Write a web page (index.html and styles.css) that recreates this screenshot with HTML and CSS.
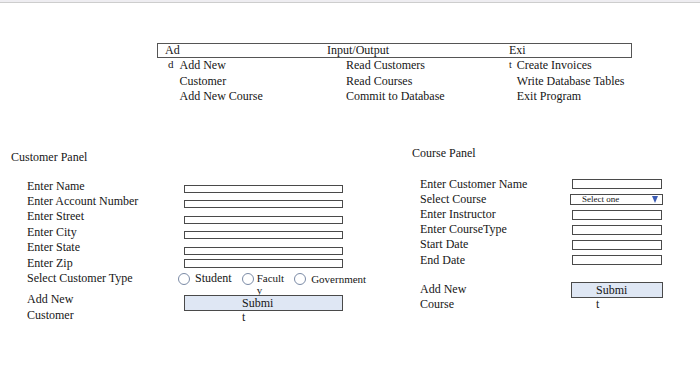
FILE: index.html
```html
<!DOCTYPE html>
<html lang="en">
<head>
    <meta charset="UTF-8">
    <meta name="viewport" content="width=device-width, initial-scale=1.0">
    <title>Customer and Course Panels</title>
    <link rel="stylesheet" href="styles.css">
</head>
<body>
    <div class="topbar"></div>

    <nav class="menu">
        <div class="menu-head">
            <span class="head-cell first">Ad</span>
            <span class="head-cell">Input/Output</span>
            <span class="head-cell">Exi</span>
        </div>
        <div class="menu-items">
            <div class="menu-col col-add">
                <span class="stray">d</span>
                <ul>
                    <li>Add New<br>Customer</li>
                    <li>Add New Course</li>
                </ul>
            </div>
            <div class="menu-col col-io">
                <ul>
                    <li>Read Customers</li>
                    <li>Read Courses</li>
                    <li>Commit to Database</li>
                </ul>
            </div>
            <div class="menu-col col-exit">
                <span class="stray">t</span>
                <ul>
                    <li>Create Invoices</li>
                    <li>Write Database Tables</li>
                    <li>Exit Program</li>
                </ul>
            </div>
        </div>
    </nav>

    <div class="panels">
        <section class="panel customer">
            <h2 class="panel-title">Customer Panel</h2>
            <div class="form customer-form">
                <div class="label">Enter Name</div>
                <div class="field"></div>
                <div class="label">Enter Account Number</div>
                <div class="field"></div>
                <div class="label">Enter Street</div>
                <div class="field"></div>
                <div class="label">Enter City</div>
                <div class="field"></div>
                <div class="label">Enter State</div>
                <div class="field"></div>
                <div class="label">Enter Zip</div>
                <div class="field zip"></div>
                <div class="label">Select Customer Type</div>
                <div class="radios">
                    <span class="radio"><span class="dot"></span><span>Student</span></span>
                    <span class="radio small"><span class="dot"></span><span class="wrap">Facult<br>y</span></span>
                    <span class="radio small"><span class="dot"></span><span>Government</span></span>
                </div>
                <div class="label add-label">Add New<br>Customer</div>
                <div class="submit">Submi<br>t</div>
            </div>
        </section>

        <section class="panel course">
            <h2 class="panel-title">Course Panel</h2>
            <div class="form course-form">
                <div class="label">Enter Customer Name</div>
                <div class="field"></div>
                <div class="label">Select Course</div>
                <div class="select"><span>Select one</span><span class="arrow"></span></div>
                <div class="label">Enter Instructor</div>
                <div class="field"></div>
                <div class="label">Enter CourseType</div>
                <div class="field"></div>
                <div class="label">Start Date</div>
                <div class="field"></div>
                <div class="label">End Date</div>
                <div class="field"></div>
                <div class="label add-label">Add New<br>Course</div>
                <div class="submit">Submi<br>t</div>
            </div>
        </section>
    </div>
</body>
</html>
```

FILE: styles.css
```css
body {
    margin: 0;
    font-family: "Liberation Serif", "Times New Roman", serif;
    font-size: 12px;
    color: #161616;
    background: #fff;
}
.topbar {
    height: 2px;
    background-color: #eeedf1;
    border-bottom: 1px solid #cdcdcd;
}

/* menu bar */
.menu {
    width: 475px;
    margin: 40px 0 0 157px;
}
.menu-head,
.menu-items {
    display: grid;
    grid-template-columns: 169px 182px 1fr;
}
.menu-head {
    border: 1px solid #555;
    line-height: 13px;
}
.head-cell.first {
    padding-left: 7px;
}
.menu-items {
    padding-left: 1px;
    line-height: 15.5px;
}
.menu-col {
    display: flex;
    align-items: flex-start;
}
.menu-col ul {
    list-style: none;
    margin: 0;
    padding: 0;
}
.stray {
    font-size: 11px;
    line-height: 11px;
    margin-top: 1px;
}
.col-add .stray {
    margin-left: 10px;
    margin-right: 6px;
}
.col-io ul {
    margin-left: 19px;
}
.col-exit .stray {
    font-size: 10px;
    margin-left: 0;
    margin-right: 5px;
}

/* panels */
.panels {
    display: flex;
    align-items: flex-start;
    margin-top: 41px;
}
.panel-title {
    margin: 0;
    font-size: 12px;
    font-weight: normal;
    line-height: 15.5px;
}
.customer {
    box-sizing: border-box;
    width: 412px;
    padding: 4px 0 0 11px;
}
.customer .panel-title {
    margin-bottom: 13.5px;
}
.course .panel-title {
    margin-bottom: 15.6px;
}

.form {
    display: grid;
}
.customer-form {
    margin-left: 16px;
    grid-template-columns: 157px 159px;
}
.course-form {
    margin-left: 8px;
    grid-template-columns: 152px 90px;
}
.label {
    line-height: 15.4px;
    white-space: nowrap;
}
.field {
    box-sizing: border-box;
    border: 1px solid #4a4a4a;
    background: #fff;
}
.customer-form .field {
    height: 8px;
    align-self: end;
    margin-bottom: 1px;
}
.customer-form .field.zip {
    height: 9px;
    margin-bottom: 3px;
}
.course-form .label {
    line-height: 15.2px;
}
.course-form .field {
    height: 10px;
    align-self: center;
}

.select {
    box-sizing: border-box;
    width: 93px;
    height: 11px;
    margin-left: -2px;
    align-self: center;
    border: 1px solid #4a4a4a;
    display: flex;
    align-items: center;
    justify-content: space-between;
    padding: 0 4px 0 11px;
    font-size: 9px;
    line-height: 9px;
}
.arrow {
    width: 0;
    height: 0;
    border-left: 3.5px solid transparent;
    border-right: 3.5px solid transparent;
    border-top: 7px solid #3c5cb4;
}

/* radio row */
.radios {
    display: flex;
    align-items: center;
    height: 15.4px;
    margin-left: -6px;
    white-space: nowrap;
}
.radio {
    display: flex;
    align-items: center;
    gap: 5px;
    margin-right: 10px;
}
.radio.small {
    font-size: 11px;
    gap: 3px;
}
.radio.small:last-child {
    gap: 5px;
}
.dot {
    box-sizing: border-box;
    width: 12px;
    height: 12px;
    border: 1px solid #7b8ba6;
    border-radius: 50%;
    background: #fff;
}
.wrap {
    height: 12px;
    line-height: 12px;
    margin-top: -2px;
}

/* add rows */
.add-label {
    line-height: 16px;
}
.customer-form .add-label {
    margin-top: 5px;
}
.course-form .add-label {
    margin-top: 14.4px;
}
.submit {
    box-sizing: border-box;
    height: 16px;
    border: 1px solid #4a4a4a;
    background-color: #dfe7f4;
    line-height: 14px;
    white-space: nowrap;
}
.customer-form .submit {
    margin-top: 9px;
    padding-left: 57px;
}
.course-form .submit {
    width: 92px;
    margin: 14.4px 0 0 -1px;
    padding-left: 24px;
}
```
